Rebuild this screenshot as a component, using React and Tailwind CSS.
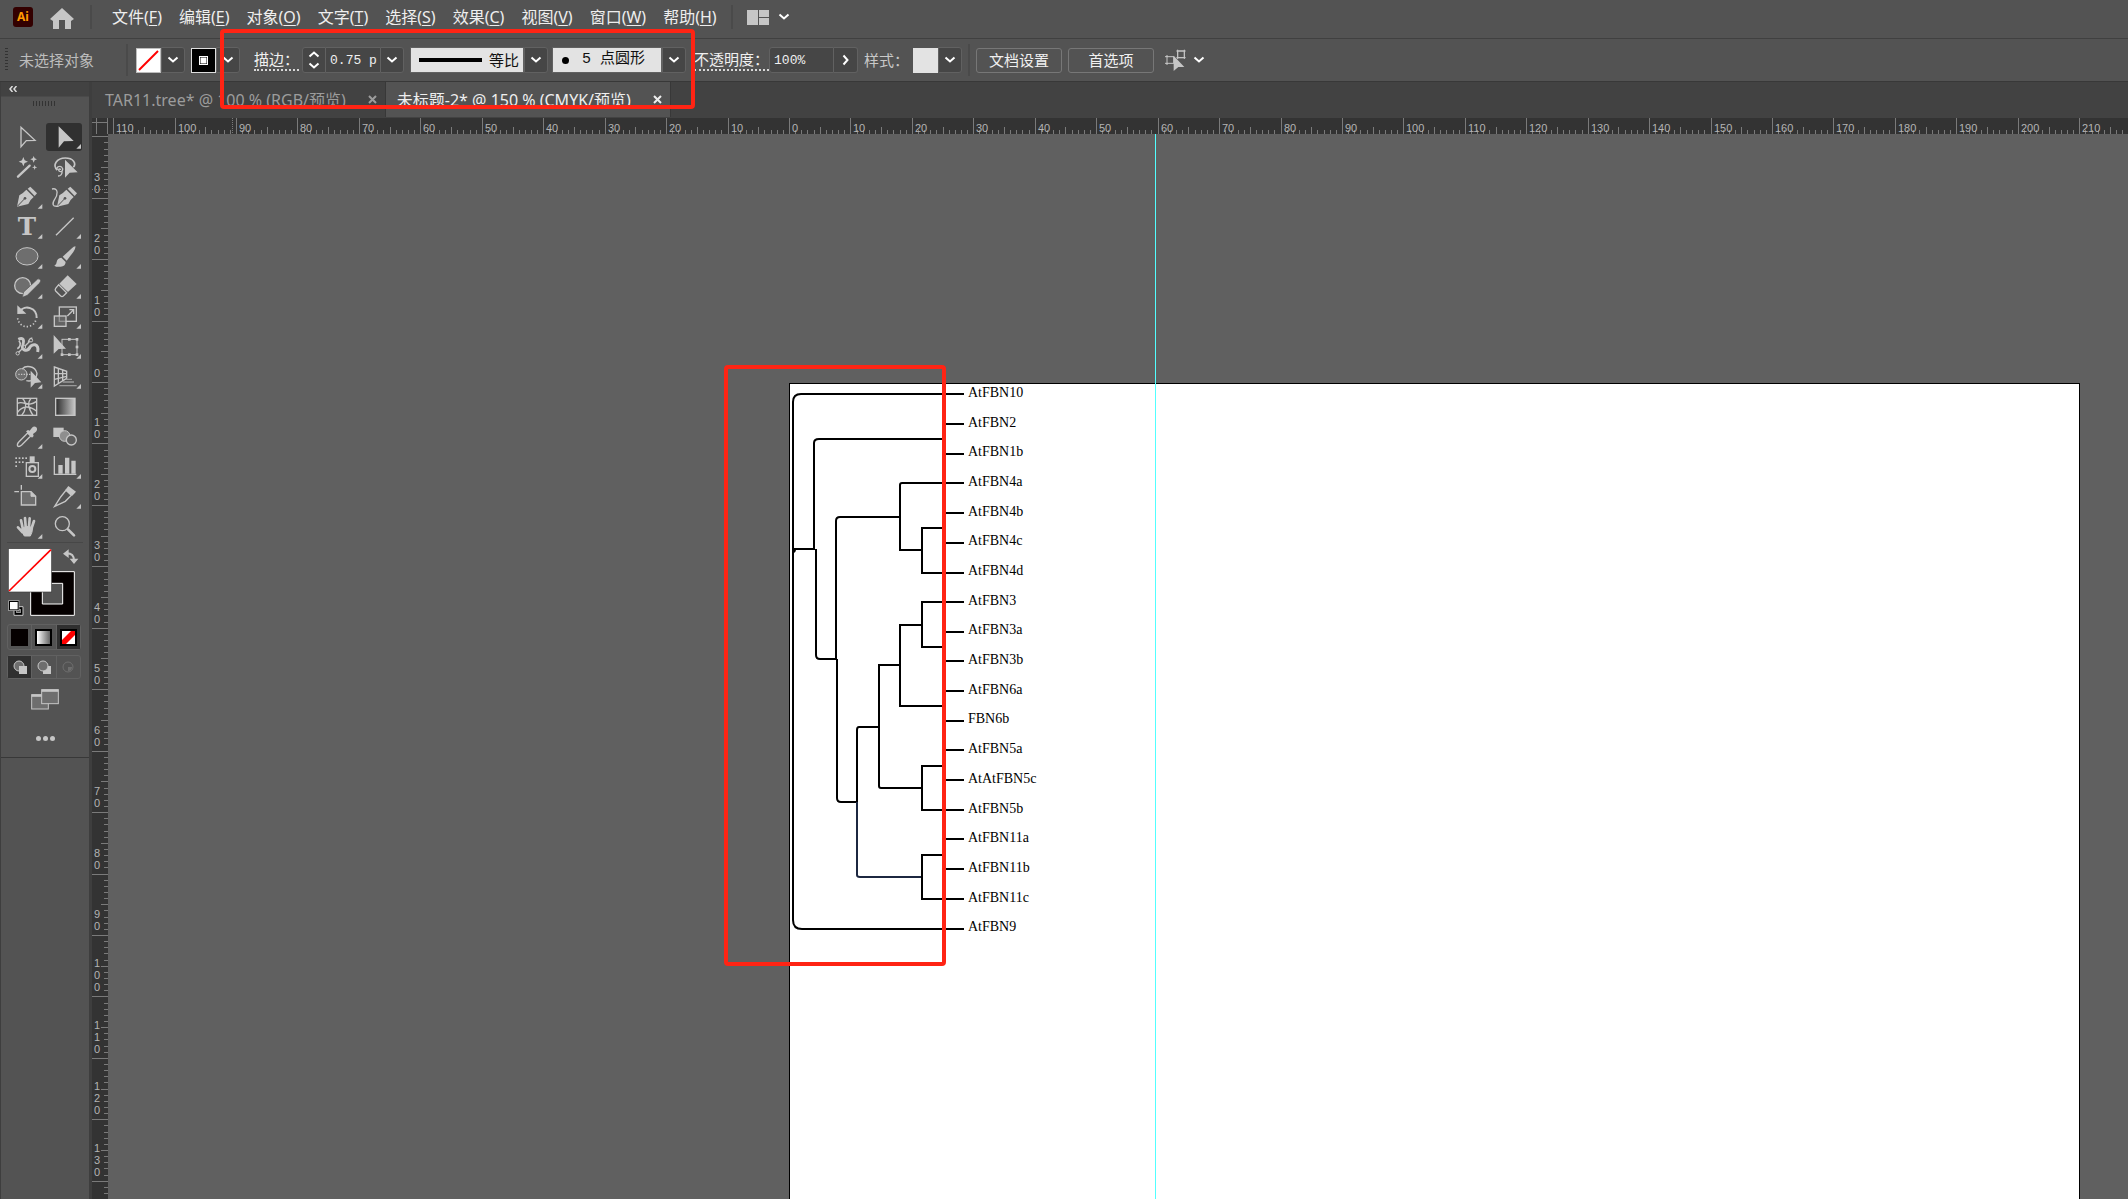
import { useState } from "react";
import clsx from "clsx";

const menus = [
  ["文件", "F"],
  ["编辑", "E"],
  ["对象", "O"],
  ["文字", "T"],
  ["选择", "S"],
  ["效果", "C"],
  ["视图", "V"],
  ["窗口", "W"],
  ["帮助", "H"],
];

const tabs = [
  { id: 1, title: "TAR11.tree* @ 100 % (RGB/预览)" },
  { id: 2, title: "未标题-2* @ 150 % (CMYK/预览)" },
];

const leaves = [
  "AtFBN10",
  "AtFBN2",
  "AtFBN1b",
  "AtFBN4a",
  "AtFBN4b",
  "AtFBN4c",
  "AtFBN4d",
  "AtFBN3",
  "AtFBN3a",
  "AtFBN3b",
  "AtFBN6a",
  "FBN6b",
  "AtFBN5a",
  "AtAtFBN5c",
  "AtFBN5b",
  "AtFBN11a",
  "AtFBN11b",
  "AtFBN11c",
  "AtFBN9",
];

// pixels for one millimetre at 150 %
const MM = 6.144;

const ink = "#c6c6c6";

/* ---------- toolbox icons, all drawn on a 108 x 90 grid ---------- */

const penShape = (
  <g fill={ink}>
    <path d="M24 74 L31 40 Q42 34 52 23 L74 45 Q64 52 58 66 Z" />
    <path d="M56 20 L64 14 L84 34 L77 42 Z" />
    <path d="M25 73 L46 51" stroke="#535353" strokeWidth="3" />
    <circle cx="48" cy="49" r="4" fill="#535353" />
  </g>
);

const tools = [
  {
    name: "选择工具",
    icon: <path d="M36 16 V74 L52 56 L78 55 Z" fill="none" stroke={ink} strokeWidth="4" />,
  },
  {
    name: "直接选择工具",
    more: true,
    icon: <path d="M38 13 V77 L54 58 L83 57 Z" fill={ink} />,
  },
  {
    name: "魔棒工具",
    icon: (
      <g fill={ink}>
        <path d="M27 74 L62 41" stroke={ink} strokeWidth="7" strokeLinecap="round" />
        <path d="M43 15 L47 25 L57 29 L47 33 L43 43 L39 33 L29 29 L39 25 Z" />
        <path d="M74 12 L77 19 L84 22 L77 25 L74 32 L71 25 L64 22 L71 19 Z" />
        <path d="M77 38 L79 44 L85 46 L79 48 L77 54 L75 48 L69 46 L75 44 Z" />
      </g>
    ),
  },
  {
    name: "套索工具",
    icon: (
      <g>
        <path d="M34 54 C18 40 32 18 58 18 C82 18 92 34 82 46" fill="none" stroke={ink} strokeWidth="5" />
        <path d="M34 54 C28 44 46 38 50 50 C52 60 38 62 38 53 C38 50 44 50 44 54 M48 56 C50 66 44 72 36 72" fill="none" stroke={ink} strokeWidth="4" />
        <path d="M57 23 V77 L71 62 L95 61 Z" fill={ink} />
      </g>
    ),
  },
  { name: "钢笔工具", more: true, icon: penShape },
  {
    name: "曲率工具",
    icon: (
      <g>
        <g transform="translate(9 0)">{penShape}</g>
        <path d="M18 21 C40 16 34 42 26 52 C18 64 18 76 38 72" fill="none" stroke={ink} strokeWidth="4" />
      </g>
    ),
  },
  {
    name: "文字工具",
    more: true,
    icon: (
      <text x="54" y="70" textAnchor="middle" fontFamily="DejaVu Serif, serif" fontWeight="700" fontSize="74" fill={ink}>
        T
      </text>
    ),
  },
  {
    name: "直线段工具",
    more: true,
    icon: <path d="M30 70 L83 17" stroke={ink} strokeWidth="4" />,
  },
  {
    name: "椭圆工具",
    more: true,
    icon: <ellipse cx="54" cy="43" rx="33" ry="26" fill="#6e6e6e" stroke={ink} strokeWidth="3" />,
  },
  {
    name: "画笔工具",
    more: true,
    icon: (
      <g fill={ink}>
        <path d="M88 13 Q90 18 82 30 L62 56 L50 44 L76 20 Q84 13 88 13 Z" />
        <path d="M46 47 L59 60 Q58 74 44 74 Q32 76 25 71 Q32 68 32 60 Q34 48 46 47 Z" />
      </g>
    ),
  },
  {
    name: "Shaper 工具",
    more: true,
    icon: (
      <g>
        <circle cx="41" cy="41" r="24" fill="#6e6e6e" stroke={ink} strokeWidth="4" />
        <path d="M86 21 Q93 19 95 26 Q95 30 91 34 L55 70 L40 76 L44 60 Z" fill={ink} stroke="#535353" strokeWidth="2" />
      </g>
    ),
  },
  {
    name: "橡皮擦工具",
    more: true,
    icon: (
      <g>
        <path d="M65 10 L92 36 L66 60 L40 35 Z" fill={ink} />
        <path d="M38 38 L62 62 L52 72 Q48 75 44 72 L29 57 Q26 53 29 49 Z" fill="none" stroke={ink} strokeWidth="4" />
      </g>
    ),
  },
  {
    name: "旋转工具",
    more: true,
    icon: (
      <g>
        <path d="M34 27 C46 8 84 16 83 48" fill="none" stroke={ink} strokeWidth="6" />
        <path d="M25 10 V36 L52 35 Z" fill={ink} />
        <path d="M80 56 A28 28 0 0 1 26 48" fill="none" stroke={ink} strokeWidth="5" strokeDasharray="4 6" />
      </g>
    ),
  },
  {
    name: "比例缩放工具",
    more: true,
    icon: (
      <g fill="none" stroke={ink} strokeWidth="4">
        <rect x="40" y="15" width="51" height="43" />
        <rect x="25" y="42" width="35" height="31" fill="#6e6e6e" fillOpacity="0.6" />
        <path d="M64 42 L82 24 M70 23 H83 V36" />
      </g>
    ),
  },
  {
    name: "宽度工具",
    more: true,
    icon: (
      <g fill="none" stroke={ink}>
        <path d="M28 22 C44 14 46 26 42 38 C36 54 54 62 62 46" strokeWidth="9" />
        <path d="M30 26 C38 36 32 46 25 50 M58 30 C64 22 60 20 70 18" strokeWidth="5" />
        <path d="M58 54 C68 30 92 34 86 60" strokeWidth="9" />
        <path d="M26 64 L64 26" strokeWidth="4" />
        <circle cx="26" cy="64" r="5" strokeWidth="3" fill="#535353" />
        <circle cx="66" cy="25" r="5" strokeWidth="3" fill="#535353" />
        <circle cx="46" cy="45" r="4" strokeWidth="3" fill="#535353" />
      </g>
    ),
  },
  {
    name: "自由变换工具",
    more: true,
    icon: (
      <g>
        <rect x="48" y="22" width="45" height="46" fill="none" stroke={ink} strokeWidth="3" />
        <g fill={ink}>
          <rect x="66" y="18" width="8" height="8" />
          <rect x="89" y="18" width="8" height="8" />
          <rect x="89" y="41" width="8" height="8" />
          <rect x="89" y="64" width="8" height="8" />
          <rect x="66" y="64" width="8" height="8" />
          <rect x="44" y="64" width="8" height="8" />
        </g>
        <path d="M23 9 V65 L38 51 L60 50 Z" fill={ink} />
      </g>
    ),
  },
  {
    name: "形状生成器工具",
    more: true,
    icon: (
      <g>
        <path d="M40 20 C50 10 78 10 84 34 C84 50 70 60 52 56" fill="none" stroke={ink} strokeWidth="4" />
        <circle cx="37" cy="37" r="17" fill="#6e6e6e" stroke={ink} strokeWidth="3" />
        <path d="M28 37 H74" stroke={ink} strokeWidth="4" strokeDasharray="4 4" />
        <path d="M65 26 V77 L78 63 L97 61 Z" fill={ink} />
      </g>
    ),
  },
  {
    name: "透视网格工具",
    more: true,
    icon: (
      <g fill="none" stroke={ink} strokeWidth="4">
        <path d="M25 15 L62 28 V49 L25 72 Z M37 19 V64 M50 23 V56 M25 34 L62 35 M25 52 L62 43" />
        <path d="M60 52 H78 M50 60 H84 M40 71 H92" stroke="#9a9a9a" />
      </g>
    ),
  },
  {
    name: "网格工具",
    icon: (
      <g fill="none" stroke={ink} strokeWidth="4">
        <rect x="25" y="19" width="58" height="51" />
        <path d="M40 19 C56 34 50 56 38 70 M66 19 C52 34 60 52 72 70 M25 34 C46 24 54 48 83 28 M25 62 C40 40 62 40 83 58" />
      </g>
    ),
  },
  {
    name: "渐变工具",
    icon: (
      <g>
        <defs>
          <linearGradient id="tool-gradient">
            <stop offset="0" stopColor="#2c2c2c" />
            <stop offset="1" stopColor="#c8c8c8" />
          </linearGradient>
        </defs>
        <rect x="29" y="19" width="58" height="51" fill="url(#tool-gradient)" stroke={ink} strokeWidth="4" />
      </g>
    ),
  },
  {
    name: "吸管工具",
    more: true,
    icon: (
      <g>
        <path d="M56 33 L65 42 L38 69 Q30 76 26 72 Q23 66 30 59 Z" fill="none" stroke={ink} strokeWidth="4" />
        <path d="M51 28 L57 24 L62 26 L69 17 Q76 10 82 16 Q87 22 81 29 L72 36 L74 42 L69 47 Z" fill={ink} />
      </g>
    ),
  },
  {
    name: "混合工具",
    icon: (
      <g>
        <rect x="22" y="17" width="31" height="28" fill={ink} />
        <circle cx="56" cy="42" r="16" fill="#8e8e8e" stroke={ink} strokeWidth="3" />
        <circle cx="76" cy="54" r="15" fill="#5e5e5e" stroke={ink} strokeWidth="4" />
      </g>
    ),
  },
  {
    name: "符号喷枪工具",
    more: true,
    icon: (
      <g>
        <rect x="52" y="32" width="36" height="41" fill="none" stroke={ink} strokeWidth="4" />
        <rect x="62" y="13" width="15" height="18" fill={ink} />
        <circle cx="70" cy="51" r="9" fill="none" stroke={ink} strokeWidth="6" />
        <g fill={ink}>
          <rect x="19" y="16" width="5" height="5" />
          <rect x="29" y="16" width="5" height="5" />
          <rect x="39" y="16" width="5" height="5" />
          <rect x="49" y="16" width="5" height="5" />
          <rect x="19" y="28" width="5" height="5" />
          <rect x="29" y="28" width="5" height="5" />
          <rect x="39" y="28" width="5" height="5" />
          <rect x="19" y="40" width="5" height="5" />
        </g>
      </g>
    ),
  },
  {
    name: "柱形图工具",
    more: true,
    icon: (
      <g>
        <path d="M25 12 V67 H91" fill="none" stroke={ink} strokeWidth="4" />
        <path d="M37 39 H50 V65 H37 Z M57 17 H70 V65 H57 Z M76 26 H89 V65 H76 Z" fill={ink} />
      </g>
    ),
  },
  {
    name: "画板工具",
    icon: (
      <g>
        <path d="M37 29 H66 L80 43 V69 H37 Z" fill="#6e6e6e" stroke={ink} strokeWidth="4" />
        <path d="M66 29 V43 H80" fill={ink} stroke={ink} strokeWidth="3" />
        <path d="M16 29 H30 M37 9 V23" stroke={ink} strokeWidth="4" />
      </g>
    ),
  },
  {
    name: "切片工具",
    more: true,
    icon: (
      <g>
        <path d="M60 25 L76 40 L58 58 L26 73 L44 45 Z" fill="none" stroke={ink} strokeWidth="4" />
        <path d="M67 12 L90 29 L79 41 L58 24 Z" fill={ink} />
      </g>
    ),
  },
  {
    name: "抓手工具",
    more: true,
    icon: (
      <g fill="none" stroke={ink} strokeWidth="8" strokeLinecap="round">
        <path d="M41 48 L36 25 M50 44 L48 18 M60 44 L62 19 M68 48 L75 27 M40 60 L27 46" />
        <path d="M38 50 Q54 38 71 48 Q70 62 64 72 H46 Q42 64 36 56 Z" fill={ink} strokeWidth="3" />
      </g>
    ),
  },
  {
    name: "缩放工具",
    icon: (
      <g fill="none" stroke={ink}>
        <circle cx="49" cy="35" r="21" strokeWidth="4" />
        <path d="M66 52 L84 70" strokeWidth="8" strokeLinecap="round" />
      </g>
    ),
  },
];

/* ---------- small shared parts ---------- */

function Chevron({ className }) {
  return (
    <svg viewBox="0 0 12 8" className={clsx("w-3 h-2 shrink-0", className)} fill="none" stroke="#fff" strokeWidth="2">
      <path d="M1.500 1.500 L6 5.500 L10.500 1.500" />
    </svg>
  );
}

function DropButton({ label, className }) {
  return (
    <button
      aria-label={label}
      className={clsx("h-[26px] w-6 shrink-0 flex items-center justify-center bg-[#464646] border border-[#616161] rounded-r-[3px]", className)}
    >
      <Chevron />
    </button>
  );
}

function Divider({ className }) {
  return <div className={clsx("w-0.5 shrink-0 bg-[#4a4a4a]", className)} />;
}

/* ---------- top bars ---------- */

function MenuBar() {
  return (
    <header className="h-[39px] shrink-0 flex items-center border-b border-[#404040] pb-1 font-['Noto_Sans','Noto_Sans_CJK_SC',sans-serif] text-[16px] text-[#eeeeee]">
      <div className="ml-[13px] size-5 rounded-[3px] bg-[#330000] flex items-center justify-center text-[12px] leading-none font-bold text-[#ff9a00]">
        Ai
      </div>
      <button aria-label="主页" className="ml-[17px]">
        <svg viewBox="0 0 24 22" className="w-6 h-[22px] mt-1" fill={ink}>
          <path d="M12 0 L24 11 L21 13 V21 H15 V12 H9 V21 H3 V13 L0 11 Z" />
        </svg>
      </button>
      <Divider className="ml-4 h-6" />
      <nav className="ml-5 flex gap-[17px] whitespace-nowrap">
        {menus.map(([name, key]) => (
          <button key={key}>
            {name}(<span className="underline underline-offset-2">{key}</span>)
          </button>
        ))}
      </nav>
      <Divider className="ml-[14px] h-6" />
      <button aria-label="排列文档" className="ml-[14px] flex items-center gap-[9px]">
        <svg viewBox="0 0 22 15" className="w-[22px] h-[15px]" fill={ink}>
          <path d="M0 0 H11 V15 H0 Z M12 0 H22 V7 H12 Z M12 8 H22 V15 H12 Z" />
        </svg>
        <Chevron />
      </button>
    </header>
  );
}

function ControlBar() {
  return (
    <section className="h-[42px] shrink-0 flex items-center font-['Noto_Sans_CJK_SC',sans-serif] text-[15px] text-[#f0f0f0] whitespace-nowrap">
      <svg viewBox="0 0 3 24" className="ml-[5px] w-[3px] h-6">
        <path d="M1.500 0 V24" stroke="#333" strokeWidth="3" strokeDasharray="1 2" />
      </svg>
      <span className="ml-[11px] text-[#bdbdbd]">未选择对象</span>
      <Divider className="ml-8 h-8" />

      <button aria-label="填色" className="ml-2 size-[25px] border border-[#bdbdbd] bg-white">
        <svg viewBox="0 0 23 23" className="w-full h-full">
          <path d="M2 21 L21 2" stroke="#f00" strokeWidth="2" />
        </svg>
      </button>
      <DropButton label="填色选项" />
      <button aria-label="描边颜色" className="ml-1.5 size-[25px] border border-[#dddddd] bg-black">
        <svg viewBox="0 0 23 23" className="w-full h-full" fill="none" stroke="#fff">
          <rect x="7.500" y="7.500" width="8" height="8" />
          <rect x="9" y="9" width="5" height="5" fill="#fff" />
        </svg>
      </button>
      <DropButton label="描边颜色选项" />

      <label htmlFor="stroke-weight" className="ml-[14px] border-b-2 border-dotted border-[#d8d8d8] leading-5">
        描边：
      </label>
      <button aria-label="调整描边粗细" className="ml-[3px] h-[26px] w-6 flex flex-col items-center justify-center gap-1 rounded-l-[3px] border border-[#616161] bg-[#464646]">
        <Chevron className="rotate-180" />
        <Chevron />
      </button>
      <input
        id="stroke-weight"
        defaultValue="0.75 p"
        className="h-[26px] w-[54px] border-y border-[#616161] bg-[#464646] pl-1 font-['Liberation_Mono',monospace] text-[13px]"
      />
      <DropButton label="描边粗细选项" />

      <div className="ml-1.5 h-[26px] w-[114px] flex items-center bg-[#e3e3e3] border border-[#616161] pl-2 text-[#111]">
        <div className="w-[63px] h-1 bg-black" />
        <select aria-label="变量宽度配置文件" className="ml-auto mr-1 appearance-none w-[30px] text-[15px] leading-5">
          <option>等比</option>
        </select>
      </div>
      <DropButton label="宽度配置选项" />
      <div className="ml-1 h-[26px] w-[110px] flex items-center bg-[#e3e3e3] border border-[#616161] pl-[9px] text-[#111]">
        <div className="size-[7px] rounded-full bg-black" />
        <select
          aria-label="画笔定义"
          className="ml-[13px] appearance-none w-20 font-['Liberation_Mono','Noto_Sans_CJK_SC',monospace] text-[15px] leading-5"
        >
          <option>5 点圆形</option>
        </select>
      </div>
      <DropButton label="画笔选项" />

      <label htmlFor="opacity" className="ml-2 border-b-2 border-dotted border-[#d8d8d8] leading-5">
        不透明度：
      </label>
      <input
        id="opacity"
        defaultValue="100%"
        className="h-[26px] w-[65px] rounded-l-[3px] border border-[#616161] bg-[#464646] pl-1 font-['Liberation_Mono',monospace] text-[13px]"
      />
      <button aria-label="不透明度选项" className="h-[26px] w-6 flex items-center justify-center rounded-r-[3px] border border-l-0 border-[#616161] bg-[#464646]">
        <Chevron className="-rotate-90" />
      </button>
      <span className="ml-1.5 text-[#c8c8c8]">样式：</span>
      <button aria-label="图形样式" className="ml-1 size-[25px] bg-[#e3e3e3]" />
      <DropButton label="图形样式选项" />
      <Divider className="ml-1.5 h-8" />

      <button className="ml-1.5 h-[25px] w-[86px] rounded-[3px] border border-[#777]">文档设置</button>
      <button className="ml-1.5 h-[25px] w-[86px] rounded-[3px] border border-[#777]">首选项</button>
      <button aria-label="对齐选项" className="ml-[11px] flex items-center gap-1.5">
        <svg viewBox="0 0 66 66" className="size-[22px]">
          <g fill="none" stroke={ink} strokeWidth="3">
            <rect x="6" y="23" width="20" height="20" />
            <rect x="38" y="6" width="20" height="20" />
            <path d="M0 23 H8 M0 43 H8 M6 18 V24 M6 42 V48 M34 6 H62 M34 26 H62 M38 2 V30 M58 2 V30" />
          </g>
          <path d="M26 20 V66 L40 54 L58 54 Z" fill={ink} />
        </svg>
        <Chevron />
      </button>
    </section>
  );
}

function TabStrip() {
  const [active, setActive] = useState(2);
  return (
    <div className="h-9 shrink-0 flex bg-[#424242] font-['Noto_Sans','Noto_Sans_CJK_SC',sans-serif] text-[16px]">
      {tabs.map((tab) => (
        <div
          key={tab.id}
          className={clsx(
            "h-[35px] flex items-center gap-5 border-r border-[#383838] pr-1.5 whitespace-nowrap",
            active === tab.id ? "bg-[#535353] text-[#eeeeee] pl-[11px]" : "text-[#9c9c9c] pl-[13px]"
          )}
        >
          <button onClick={() => setActive(tab.id)}>{tab.title}</button>
          <button aria-label="关闭" className="p-0.5">
            <svg viewBox="0 0 9 9" className="size-[9px]" fill="none" stroke="currentColor" strokeWidth="2">
              <path d="M1 1 L8 8 M8 1 L1 8" />
            </svg>
          </button>
        </div>
      ))}
    </div>
  );
}

/* ---------- toolbox ---------- */

function FillStroke() {
  return (
    <svg viewBox="0 45 270 225" className="w-[90px] h-[75px]">
      <path d="M92 131 H223 V262 H92 Z M127 166 V228 H188 V166 Z" fill="#050000" fillRule="evenodd" stroke="#fff" strokeWidth="3" />
      <rect x="25" y="62" width="130" height="130" fill="#fff" stroke="#3c3c3c" strokeWidth="2" />
      <path d="M27 189 L153 65" stroke="#f00" strokeWidth="5" />
      <path d="M200 76 Q222 76 222 98" fill="none" stroke={ink} strokeWidth="6" />
      <path d="M206 64 V90 L189 77 Z M209 92 H235 L222 108 Z" fill={ink} />
      <path d="M42 236 H69 V262 H42 Z" fill="#000" stroke={ink} strokeWidth="3" />
      <rect x="50" y="244" width="11" height="10" fill="#535353" stroke={ink} strokeWidth="2" />
      <rect x="28" y="220" width="27" height="26" fill="#fff" stroke="#000" strokeWidth="4" />
      <rect x="26" y="218" width="31" height="30" fill="none" stroke={ink} strokeWidth="2" />
    </svg>
  );
}

function ToolBox() {
  const [current, setCurrent] = useState("直接选择工具");
  return (
    <aside className="w-[92px] shrink-0 flex flex-col bg-[#535353] border-l border-r-[3px] border-[#3e3e3e]">
      <div className="h-[15px] shrink-0 bg-[#424242] border-b border-[#4a4a4a] flex items-center">
        <button aria-label="折叠" className="ml-2">
          <svg viewBox="0 0 8 6" className="w-2 h-1.5" fill="none" stroke="#ddd" strokeWidth="1.500">
            <path d="M3.500 0 L1 3 L3.500 6 M7.500 0 L5 3 L7.500 6" />
          </svg>
        </button>
      </div>
      <svg viewBox="0 0 24 5" className="mt-1 ml-8 w-6 h-[5px] shrink-0">
        <path d="M0 2.500 H24" stroke="#333" strokeWidth="5" strokeDasharray="1 2" />
      </svg>
      <div className="mt-4 ml-2 grid w-[73px] shrink-0 grid-cols-2">
        {tools.map((tool, i) => (
          <button key={tool.name} aria-label={tool.name} onClick={() => setCurrent(tool.name)} className="h-[30px] flex items-center">
            <svg
              viewBox="0 0 108 90"
              className={clsx("w-9 h-7 rounded-[3px]", current === tool.name && "bg-[#303030]")}
              preserveAspectRatio="xMidYMid slice"
            >
              {tool.icon}
              {tool.more && <path d={i % 2 ? "M105 66 V80 H91 Z" : "M100 66 V80 H86 Z"} fill={ink} />}
            </svg>
          </button>
        ))}
      </div>
      <div className="mx-1.5 h-px shrink-0 bg-[#474747]" />
      <button aria-label="填色和描边" className="-ml-px h-[75px] shrink-0">
        <FillStroke />
      </button>
      <div className="ml-1.5 mt-1.5 w-[74px] h-[26px] shrink-0 flex border border-[#616161] rounded-[3px]">
        <button aria-label="颜色" className="flex-1 flex items-center justify-center">
          <span className="size-[17px] bg-[#050000]" />
        </button>
        <button aria-label="渐变" className="flex-1 flex items-center justify-center border-x border-[#616161]">
          <span className="size-[17px] border-2 border-black bg-linear-to-r from-white to-[#666]" />
        </button>
        <button aria-label="无" className="flex-1 flex items-center justify-center bg-[#303030]">
          <svg viewBox="0 0 17 17" className="size-[17px]">
            <rect width="17" height="17" fill="#000" />
            <rect x="2" y="2" width="13" height="13" fill="#fff" />
            <path d="M2 15 V11 L11 2 H15 V6 L6 15 Z" fill="#f00" />
          </svg>
        </button>
      </div>
      <div className="ml-1.5 mt-[5px] w-[74px] h-6 shrink-0 flex border border-[#616161] rounded-[3px]">
        <button aria-label="正常绘图" className="flex-1 flex items-center justify-center bg-[#303030]">
          <svg viewBox="0 0 14 14" className="size-[14px]">
            <circle cx="6" cy="6" r="5" fill="#6e6e6e" stroke={ink} />
            <rect x="6" y="6" width="8" height="8" fill={ink} />
          </svg>
        </button>
        <button aria-label="背面绘图" className="flex-1 flex items-center justify-center border-x border-[#616161]">
          <svg viewBox="0 0 14 14" className="size-[14px]">
            <rect x="6" y="6" width="8" height="8" fill={ink} />
            <circle cx="6" cy="6" r="5" fill="#6e6e6e" stroke={ink} />
          </svg>
        </button>
        <button aria-label="内部绘图" className="flex-1 flex items-center justify-center">
          <svg viewBox="0 0 14 14" className="size-[14px]">
            <circle cx="7" cy="7" r="5" fill="none" stroke="#6e6e6e" />
            <path d="M7 7 H11 A4 4 0 0 1 7 11 Z" fill="#6e6e6e" />
          </svg>
        </button>
      </div>
      <button aria-label="更改屏幕模式" className="ml-[30px] mt-2.5 w-7 h-[21px] shrink-0">
        <svg viewBox="0 0 84 63" className="w-7 h-[21px]" fill="#6e6e6e" stroke={ink} strokeWidth="3">
          <rect x="2" y="17" width="50" height="43" />
          <path d="M2 20 H52" strokeWidth="7" />
          <rect x="32" y="2" width="50" height="42" />
          <path d="M32 5 H82" strokeWidth="7" />
        </svg>
      </button>
      <button aria-label="编辑工具栏" className="ml-[35px] mt-[26px] flex gap-0.5 shrink-0">
        <span className="size-[5px] rounded-full bg-[#c6c6c6]" />
        <span className="size-[5px] rounded-full bg-[#c6c6c6]" />
        <span className="size-[5px] rounded-full bg-[#c6c6c6]" />
      </button>
      <div className="mt-4 h-px shrink-0 bg-[#383838]" />
    </aside>
  );
}

/* ---------- rulers ---------- */

function tickSize(mm) {
  if (mm % 10 === 0) return 16;
  return mm % 5 === 0 ? 7 : 4;
}

function range(from, to) {
  return Array.from({ length: to - from + 1 }, (_, i) => from + i);
}

function TopRuler() {
  const at = (mm) => Math.round(681 + mm * MM);
  return (
    <svg className="h-4 flex-1 min-w-0 bg-[#333]" fontFamily="Liberation Sans, sans-serif" fontSize="11" fill="#b4b4b4" shapeRendering="crispEdges">
      {range(-110, 400).map((mm) => (
        <rect key={mm} x={at(mm)} y={16 - tickSize(mm)} width="1" height={tickSize(mm)} fill="#7a7a7a" />
      ))}
      {range(-11, 21).map((n) => (
        <text key={n} x={at(n * 10) + 3} y="14">
          {Math.abs(n * 10)}
        </text>
      ))}
      <path d="M124.500 0 V16" stroke="#7a7a7a" strokeDasharray="1 1" />
    </svg>
  );
}

function SideRuler() {
  const at = (mm) => Math.round(248 + mm * MM);
  return (
    <svg className="w-4 h-full bg-[#333]" fontFamily="Liberation Sans, sans-serif" fontSize="11" fill="#b4b4b4" shapeRendering="crispEdges">
      {range(-40, 300).map((mm) => (
        <rect key={mm} x={16 - tickSize(mm)} y={at(mm)} width={tickSize(mm)} height="1" fill="#7a7a7a" />
      ))}
      {range(-3, 13).map((n) => {
        const digits = String(Math.abs(n * 10)).split("");
        return digits.map((d, i) => (
          <text key={n + "-" + i} x="2" y={at(n * 10) - 5 - 12 * (digits.length - 1 - i)}>
            {d}
          </text>
        ));
      })}
      <path d="M0 55.500 H16" stroke="#7a7a7a" strokeDasharray="1 1" />
    </svg>
  );
}

/* ---------- artwork ---------- */

// Branches are in artboard pixels, the artboard's border included
function Tree() {
  return (
    <svg viewBox="1 1 260 580" className="w-[260px] h-[580px]">
      <g fill="none" stroke="#000" strokeWidth="2">
        <path d="M175 11 H12 Q4 11 4 19 V537 Q4 546 13 546 H175" />
        <path d="M4 169 Q6 169 6 166 H26" />
        <path d="M25 166 V60 Q25 56 30 56 H154" />
        <path d="M27 166 V272 Q27 276 31 276 H47" />
        <path d="M47 276 V138 Q47 134 51 134 H111" />
        <path d="M48 276 V415 Q48 419 52 419 H68" />
        <path d="M175 100 H113 Q111 100 111 102 V167 H133" />
        <path d="M154 145 H133 V190 H175" />
        <path d="M90 344 H70 Q68 344 68 347 V419" />
        <path d="M68 419 V492 Q68 494 71 494 H133" stroke="#1c2740" />
        <path d="M111 282 H90 V403 Q90 405 92 405 H133" />
        <path d="M133 242 H111 V323 H154" />
        <path d="M175 219 H133 V264 H154" />
        <path d="M154 383 H133 V427 H175" />
        <path d="M154 472 H133 V516 H175" />
        <path d="M175 41 H154 V71 H175" />
        <path d="M175 130 H154 V160 H175" />
        <path d="M175 249 H154 V278 H175" />
        <path d="M175 308 H154 V338 H175" />
        <path d="M175 367 H154 V397 H175" />
        <path d="M175 456 H154 V486 H175" />
      </g>
      <g fontFamily="Liberation Serif, serif" fontSize="14" fill="#000">
        {leaves.map((leaf, i) => (
          <text key={leaf} x="179" y={Math.round(14 + i * 29.68)}>
            {leaf}
          </text>
        ))}
      </g>
    </svg>
  );
}

function Canvas() {
  return (
    <main className="relative flex-1 min-w-0 overflow-hidden bg-[#606060]">
      <div className="absolute left-[681px] top-[249px] w-[1291px] h-[1826px] border border-black bg-white">
        <Tree />
      </div>
      <div className="absolute left-[1047px] inset-y-0 w-px bg-[#52ffff]" />
      <div className="absolute left-[616px] top-[231px] w-[222px] h-[601px] rounded-[4px] border-4 border-[#ff2414]" />
    </main>
  );
}

export default function App() {
  return (
    <div className="relative h-screen flex flex-col overflow-hidden bg-[#535353]">
      <MenuBar />
      <ControlBar />
      <div className="flex-1 min-h-0 flex border-t border-[#383838]">
        <ToolBox />
        <div className="flex-1 min-w-0 flex flex-col">
          <TabStrip />
          <div className="flex shrink-0">
            <svg viewBox="0 0 16 16" className="size-4 bg-[#333]" stroke="#7a7a7a">
              <path d="M0 4.500 H16 M4.500 0 V16 M15.500 0 V16" />
            </svg>
            <TopRuler />
          </div>
          <div className="flex-1 min-h-0 flex">
            <div className="w-4 shrink-0 overflow-hidden">
              <SideRuler />
            </div>
            <Canvas />
          </div>
        </div>
      </div>
      {/* callout round the stroke controls */}
      <div className="absolute left-[220px] top-[29px] w-[475px] h-[80px] rounded-[4px] border-4 border-[#ff2414] pointer-events-none" />
    </div>
  );
}
